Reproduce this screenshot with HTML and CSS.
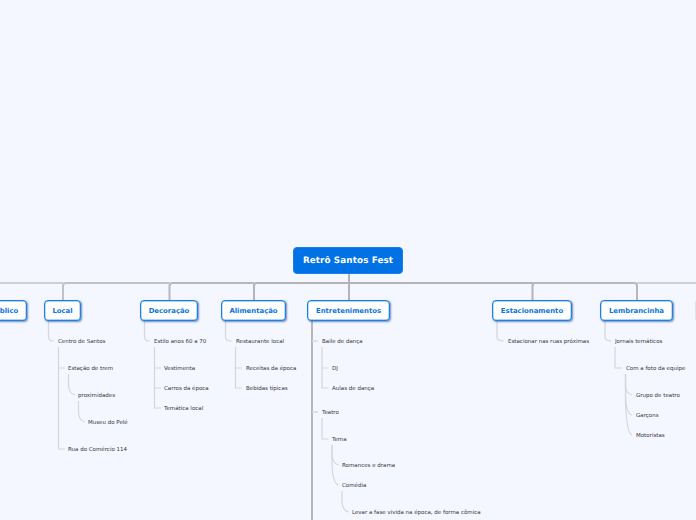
FILE: index.html
```html
<!DOCTYPE html>
<html lang="pt">
<head>
<meta charset="utf-8">
<title>Retrô Santos Fest</title>
<link rel="stylesheet" href="styles.css">
</head>
<body>
<main class="map">
<svg class="links" width="696" height="520" viewBox="0 0 696 520" fill="none">
  <g class="trunk">
    <path class="t1" d="M349 274V300"/>
    <path class="t2" d="M349 283H257Q254 283 254 286V300"/>
    <path class="t2" d="M349 283H535Q532.500 283 532.500 286V300" />
    <path class="t3" d="M254 283H172.500Q169.500 283 169.500 286V300"/>
    <path class="t3" d="M532.500 283H634Q637 283 637 286V300"/>
    <path class="t4" d="M169.500 283H66Q63 283 63 286V300"/>
    <path class="t5" d="M63 283H0"/>
    <path class="t5" d="M637 283H696"/>
  </g>
  <g class="thick">
    <path d="M312 321V520"/>
  </g>
  <g class="twig">
    <path d="M48.500 321V337Q48.500 341 53.500 341"/>
    <path d="M144.500 321V337Q144.500 341 149.500 341"/>
    <path d="M225.500 321V337Q225.500 341 231.500 341"/>
    <path d="M497 321V337Q497 341 503.500 341"/>
    <path d="M605 321V337Q605 341 611 341"/>
    <path d="M312 341H318M312 412H318"/>
  </g>
  <g class="fine">
    <path d="M58.500 347V449H65M58.500 368H65"/>
    <path d="M68.500 374V385Q69 394 75 395"/>
    <path d="M78.500 401V412Q79 421 85 422"/>
    <path d="M154.500 347V408H161M154.500 368H161M154.500 388H161"/>
    <path d="M235.500 347V388H242M235.500 368H242"/>
    <path d="M322 347V388H328.500M322 368H328.500"/>
    <path d="M322 418V439H328.500"/>
    <path d="M332 445V455Q333 464 338.500 465"/>
    <path d="M332 445V465Q333 484 338.500 485"/>
    <path d="M342 491V502Q343 511 348.500 512"/>
    <path d="M615 347V368H622"/>
    <path d="M625.500 374V385Q626 394 632 395"/>
    <path d="M625.500 374V395Q626 414 632 415"/>
    <path d="M625.500 374V405Q627 434 632 435"/>
  </g>
</svg>

<h1 class="root">Retrô Santos Fest</h1>

<div class="node n-publico">Público</div>
<div class="node n-local">Local</div>
<div class="node n-decoracao">Decoração</div>
<div class="node n-alimentacao">Alimentação</div>
<div class="node n-entretenimentos">Entretenimentos</div>
<div class="node n-estacionamento">Estacionamento</div>
<div class="node n-lembrancinha">Lembrancinha</div>
<div class="node-edge"></div>

<span class="leaf x58 y341">Centro de Santos</span>
<span class="leaf x68 y368">Estação de trem</span>
<span class="leaf x78 y395">proximidades</span>
<span class="leaf x88 y422">Museu do Pelé</span>
<span class="leaf x68 y449">Rua do Comércio 114</span>

<span class="leaf x154 y341">Estilo anos 60 a 70</span>
<span class="leaf x164 y368">Vestimenta</span>
<span class="leaf x164 y388">Carros da época</span>
<span class="leaf x164 y408">Temática local</span>

<span class="leaf x236 y341">Restaurante local</span>
<span class="leaf x246 y368">Receitas da época</span>
<span class="leaf x246 y388">Bebidas típicas</span>

<span class="leaf x322 y341">Baile de dança</span>
<span class="leaf x332 y368">DJ</span>
<span class="leaf x332 y388">Aulas de dança</span>
<span class="leaf x322 y412">Teatro</span>
<span class="leaf x332 y439">Tema</span>
<span class="leaf x342 y465">Romances e drama</span>
<span class="leaf x342 y485">Comédia</span>
<span class="leaf x352 y512">Levar a fase vivida na época, de forma cômica</span>

<span class="leaf x508 y341">Estacionar nas ruas próximas</span>

<span class="leaf x615 y341">Jornais temáticos</span>
<span class="leaf x626 y368">Com a foto da equipe</span>
<span class="leaf x636 y395">Grupo de teatro</span>
<span class="leaf x636 y415">Garçons</span>
<span class="leaf x636 y435">Motoristas</span>
</main>
</body>
</html>
```

FILE: styles.css
```css
html, body {
  margin: 0;
  padding: 0;
  background: #f4f7ff;
}

.map {
  position: relative;
  width: 696px;
  height: 520px;
  overflow: hidden;
  background: #f4f7ff;
  font-family: "DejaVu Sans", Verdana, sans-serif;
  text-rendering: geometricPrecision;
}

.links {
  position: absolute;
  left: 0;
  top: 0;
}

.trunk path { stroke-width: 2; }
.t1 { stroke: #b3b3b8; }
.t2 { stroke: #b3b3b8; }
.t3 { stroke: #b8b8bc; }
.t4 { stroke: #c2c2c6; }
.t5 { stroke: #cfcfd3; }

.thick path { stroke: #b8b8bc; stroke-width: 2; }
.twig path { stroke: #d8d8de; stroke-width: 1.3; }
.fine path { stroke: #d6d6dc; stroke-width: 1.2; }

.root {
  position: absolute;
  left: 293px;
  top: 247px;
  width: 110px;
  height: 27px;
  margin: 0;
  box-sizing: border-box;
  border-radius: 4px;
  background: #0072e5;
  border: 1px solid #1a80e8;
  color: #ffffff;
  font-size: 8.8px;
  font-weight: 700;
  letter-spacing: 0.1px;
  line-height: 27px;
  text-align: center;
  white-space: nowrap;
}

.node {
  position: absolute;
  top: 300px;
  height: 21px;
  box-sizing: border-box;
  border: 1px solid #1e7fe6;
  border-radius: 4px;
  background: #ffffff;
  box-shadow: inset 0 0 0 0.4px #5ea6ef, 1px 1px 2px rgba(30, 70, 130, 0.6);
  color: #0a74e2;
  font-size: 6.9px;
  font-weight: 700;
  line-height: 20px;
  text-align: center;
  white-space: nowrap;
}

.n-publico { left: -19px; width: 46px; }
.n-local { left: 44px; width: 37px; }
.n-decoracao { left: 140px; width: 58px; }
.n-alimentacao { left: 221px; width: 65px; }
.n-entretenimentos { left: 307px; width: 83px; }
.n-estacionamento { left: 492px; width: 80px; }
.n-lembrancinha { left: 600px; width: 73px; }

.node-edge {
  position: absolute;
  left: 695px;
  top: 300px;
  width: 10px;
  height: 21px;
  border-radius: 3px 0 0 3px;
  background: #dfe3ea;
}

.leaf {
  position: absolute;
  color: #35353c;
  font-size: 5.5px;
  line-height: 8px;
  margin-top: -3px;
  white-space: nowrap;
}

.x58 { left: 58px; }
.x68 { left: 68px; }
.x78 { left: 78px; }
.x88 { left: 88px; }
.x154 { left: 154px; }
.x164 { left: 164px; }
.x236 { left: 236px; }
.x246 { left: 246px; }
.x322 { left: 322px; }
.x332 { left: 332px; }
.x342 { left: 342px; }
.x352 { left: 352px; }
.x508 { left: 508px; }
.x615 { left: 615px; }
.x626 { left: 626px; }
.x636 { left: 636px; }

.y341 { top: 341px; }
.y368 { top: 368px; }
.y388 { top: 388px; }
.y395 { top: 395px; }
.y408 { top: 408px; }
.y412 { top: 412px; }
.y415 { top: 415px; }
.y422 { top: 422px; }
.y435 { top: 435px; }
.y439 { top: 439px; }
.y449 { top: 449px; }
.y465 { top: 465px; }
.y485 { top: 485px; }
.y512 { top: 512px; }
```
